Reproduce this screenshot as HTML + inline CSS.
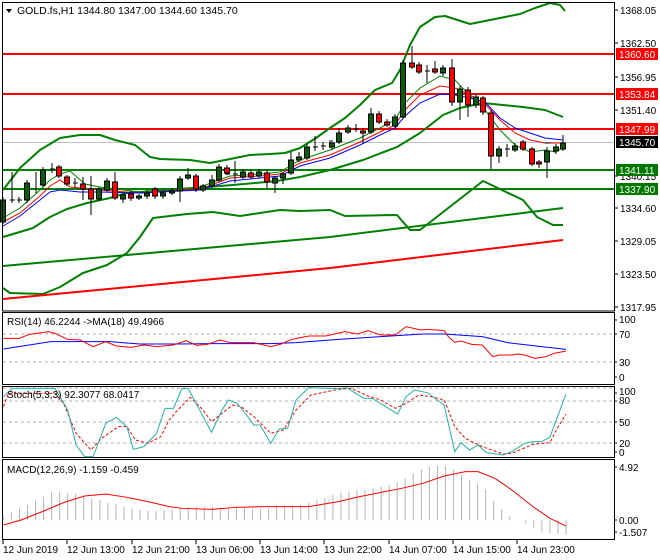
<!DOCTYPE html>
<html><head><meta charset="utf-8"><style>
html,body{margin:0;padding:0;background:#fff;width:660px;height:560px;overflow:hidden}
svg{display:block;font-family:"Liberation Sans",sans-serif;font-size:10px}
</style></head><body>
<svg width="660" height="560" viewBox="0 0 660 560" xmlns="http://www.w3.org/2000/svg">
<rect width="660" height="560" fill="#fff"/>
<!-- main horizontal levels -->
<line x1="3" y1="142.5" x2="614" y2="142.5" stroke="#c0c0c0" stroke-width="1"/>
<g stroke="#ff0000" stroke-width="2">
<line x1="3" y1="54" x2="614" y2="54"/><line x1="3" y1="94" x2="614" y2="94"/><line x1="3" y1="129" x2="614" y2="129"/>
</g>
<g stroke="#008000" stroke-width="2">
<line x1="3" y1="170" x2="614" y2="170"/><line x1="3" y1="189" x2="614" y2="189"/>
</g>
<!-- bands & MAs -->
<g fill="none" stroke-width="2" stroke-linejoin="round">
<polyline stroke="#008000" points="3,190 20,168 40,150 60,138 80,135 100,135 115,140 135,145 150,157 160,159 190,160 210,163 230,159 250,155 270,154 285,153 300,148 316,138 330,128 345,118 360,105 375,90 392,83 400,70 410,45 420,27 435,17 445,16 470,24 485,21 500,18 520,14 535,8 550,3 560,5 565,11"/>
<polyline stroke="#008000" points="3,237 33,228 50,217 67,209 87,203 110,198 127,193 167,190 233,185 277,181 300,177 330,170 363,160 397,147 420,133 443,115 460,108 483,103 523,107 545,110 563,117"/>
<polyline stroke="#008000" points="3,288 10,293 43,294 60,287 83,273 107,265 127,253 140,237 153,218 187,214 213,212 240,216 280,210 300,211 330,210 345,216 397,215 410,230 420,230 483,181 523,200 537,217 553,225 563,225"/>
<polyline stroke="#008000" points="3,266 330,237 563,208"/>
<polyline stroke="#ff0000" points="3,299 330,268 563,240"/>
</g>
<g fill="none" stroke-width="1">
<polyline stroke="#008000" points="3,218 20,208 40,190 50,180 60,174 70,171 85,184 100,187 140,192 200,187 230,176 260,174 280,172 300,160 330,150 360,138 380,128 395,120 405,103 420,88 440,76 455,80 470,96 485,110 500,130 515,145 530,152 545,150 555,152 563,148"/>
<polyline stroke="#ff0000" points="3,222 20,213 40,196 50,186 60,180 70,187 100,190 140,193 200,189 230,178 260,176 280,174 300,163 330,155 360,142 380,132 395,125 405,110 420,95 440,86 455,88 470,95 485,104 500,120 515,133 530,140 545,143 563,143"/>
<polyline stroke="#0000ff" points="3,226 20,216 40,200 50,192 60,190 80,192 100,192 140,193 200,190 230,181 260,178 280,176 300,166 330,158 360,145 380,135 395,128 405,116 420,103 440,94 455,95 470,98 485,102 500,118 515,128 530,133 545,138 563,140"/>
</g>
<!-- candles -->
<g stroke="#000" stroke-width="1" fill="none">
<path d="M3,197V224M12,172V203M19,197V203M27,180V203M36,172V193M43,167V187M52,163V173M59,165V178M67,175V186M75,178V187M83,177V200M91,176V215M99,187V201M107,178V192M115,172V200M123,193V203M131,191V201M139,194V200M147,190V199M155,187V199M163,191V199M172,188V195M180,176V202M188,168V180M196,174V192M203,184V192M212,175V188M219,164V182M227,165V175M235,161V183M243,169V179M251,170V179M259,169V178M267,170V188M275,176V193M283,172V184M291,152V175M299,152V162M307,144V160M315,136V151M323,142V150M330,140V148M332,140V150M339,128V144M348,125V134M356,124V132M363,128V143M371,108V134M379,111V124M387,119V127M395,114V129M403,60V118M412,46V69M419,62V74M427,65V83M435,61V74M443,65V76M452,59V106M460,86V120M468,87V117M476,94V108M483,96V115M491,110V169M499,146V163M507,144V157M515,143V152M523,140V151M532,147V166M539,160V168M547,147V178M556,144V154M563,135V151"/>
</g>
<g stroke="#000" stroke-width="1" fill="#0b5d0b">
<rect x="0.5" y="200" width="5" height="22"/><rect x="24.5" y="183" width="5" height="17"/><rect x="40.5" y="170" width="5" height="15"/><rect x="96.5" y="189" width="5" height="10"/><rect x="104.5" y="181" width="5" height="9"/><rect x="120.5" y="195" width="5" height="4"/><rect x="136.5" y="196" width="5" height="2"/><rect x="144.5" y="193" width="5" height="3"/><rect x="160.5" y="193" width="5" height="3"/><rect x="169.5" y="191" width="5" height="2"/><rect x="177.5" y="179" width="5" height="12"/><rect x="185.5" y="175" width="5" height="3"/><rect x="200.5" y="186" width="5" height="4"/><rect x="209.5" y="180" width="5" height="6"/><rect x="216.5" y="167" width="5" height="13"/><rect x="240.5" y="172" width="5" height="5"/><rect x="256.5" y="172" width="5" height="4"/><rect x="272.5" y="178" width="5" height="5"/><rect x="280.5" y="174" width="5" height="4"/><rect x="288.5" y="160" width="5" height="13"/><rect x="296.5" y="157" width="5" height="3"/><rect x="304.5" y="147" width="5" height="11"/><rect x="329.5" y="143" width="5" height="4"/><rect x="336.5" y="133" width="5" height="9"/><rect x="345.5" y="128" width="5" height="4"/><rect x="368.5" y="114" width="5" height="18"/><rect x="392.5" y="117" width="5" height="9"/><rect x="400.5" y="63" width="5" height="54"/><rect x="440.5" y="68" width="5" height="5"/><rect x="457.5" y="89" width="5" height="13"/><rect x="473.5" y="97" width="5" height="8"/><rect x="496.5" y="149" width="5" height="7"/><rect x="512.5" y="146" width="5" height="4"/><rect x="544.5" y="151" width="5" height="11"/><rect x="553.5" y="147" width="5" height="4"/><rect x="560.5" y="143" width="5" height="6"/>
</g>
<g stroke="#000" stroke-width="1" fill="#ff0000">
<rect x="56.5" y="167" width="5" height="9"/><rect x="64.5" y="177" width="5" height="7"/><rect x="80.5" y="184" width="5" height="5"/><rect x="88.5" y="189" width="5" height="10"/><rect x="112.5" y="182" width="5" height="16"/><rect x="128.5" y="194" width="5" height="4"/><rect x="152.5" y="189" width="5" height="7"/><rect x="193.5" y="176" width="5" height="13"/><rect x="224.5" y="168" width="5" height="5"/><rect x="248.5" y="173" width="5" height="4"/><rect x="264.5" y="173" width="5" height="9"/><rect x="360.5" y="131" width="5" height="2"/><rect x="376.5" y="114" width="5" height="8"/><rect x="384.5" y="122" width="5" height="3"/><rect x="409.5" y="63" width="5" height="4"/><rect x="416.5" y="65" width="5" height="7"/><rect x="432.5" y="69" width="5" height="3"/><rect x="449.5" y="68" width="5" height="34"/><rect x="465.5" y="90" width="5" height="15"/><rect x="480.5" y="98" width="5" height="14"/><rect x="488.5" y="113" width="5" height="43"/><rect x="520.5" y="142" width="5" height="7"/><rect x="529.5" y="149" width="5" height="15"/><rect x="536.5" y="162" width="5" height="2"/>
</g>
<g stroke="#000" stroke-width="1">
<path d="M10,200H15M17,200H22M50,169H55M73,183H78M225,174H230M233,174H238M313,147H318M321,146H326M354,129H359M425,71H430M505,149H510M545,143H550"/>
</g>
<!-- header -->
<path d="M6,9 L12,9 L9,13 Z" fill="#000"/>
<text x="17" y="14" font-size="10.5">GOLD.fs,H1  1344.80 1347.00 1344.60 1345.70</text>

<!-- panel frames -->
<g fill="none" stroke="#000" stroke-width="1">
<rect x="2.5" y="2.5" width="612" height="308.5"/>
<rect x="2.5" y="312.5" width="612" height="72"/>
<rect x="2.5" y="386.5" width="612" height="71"/>
<rect x="2.5" y="459.5" width="612" height="80"/>
</g>
<!-- axis labels main -->
<g font-size="10" fill="#000">
<g stroke="#000"><path d="M614,10H618M614,43H618M614,77H618M614,110H618M614,176H618M614,208H618M614,241H618M614,274H618M614,307H618"/></g>
<text x="620" y="14">1368.05</text><text x="620" y="47">1362.50</text><text x="620" y="81">1356.95</text><text x="620" y="114">1351.40</text><text x="620" y="180">1340.15</text><text x="620" y="212">1334.60</text><text x="620" y="245">1329.05</text><text x="620" y="278">1323.50</text><text x="620" y="311">1317.95</text>
</g>
<rect x="616" y="48" width="42" height="12" fill="#ff0000"/><text x="619" y="58" fill="#fff">1360.60</text>
<rect x="616" y="88" width="42" height="12" fill="#ff0000"/><text x="619" y="98" fill="#fff">1353.84</text>
<rect x="616" y="123" width="42" height="12" fill="#ff0000"/><text x="619" y="133" fill="#fff">1347.99</text>
<rect x="616" y="136" width="42" height="12" fill="#000"/><text x="619" y="146" fill="#fff">1345.70</text>
<rect x="616" y="164" width="42" height="12" fill="#007800"/><text x="619" y="174" fill="#fff">1341.11</text>
<rect x="616" y="183" width="42" height="12" fill="#007800"/><text x="619" y="193" fill="#fff">1337.90</text>

<!-- RSI -->
<g stroke="#b0b0b0" stroke-dasharray="3,3"><line x1="3" y1="334" x2="614" y2="334"/><line x1="3" y1="362" x2="614" y2="362"/></g>
<g transform="translate(0,310) scale(0.423,0.3333)" fill="none">
<polyline vector-effect="non-scaling-stroke" stroke="#0000ff" stroke-width="1" points="8,117 120,95 260,95 330,102 420,102 500,101 640,101 700,98 800,88 900,80 1000,72 1050,72 1140,80 1200,98 1260,107 1338,118"/>
<polyline vector-effect="non-scaling-stroke" stroke="#ff0000" stroke-width="1" points="8,85 45,85 70,73 115,65 130,70 160,88 190,90 220,110 250,95 275,108 310,112 340,105 370,110 410,105 440,92 465,106 490,103 520,90 545,98 600,98 640,110 665,102 690,88 730,78 770,78 815,65 845,72 870,62 900,75 935,75 960,50 995,60 1010,58 1050,62 1060,80 1075,97 1090,93 1115,103 1140,105 1165,140 1180,135 1210,135 1225,132 1240,135 1265,145 1290,140 1310,130 1338,123"/>
</g>
<text x="7" y="325" font-size="10">RSI(14) 46.2244  -&gt;MA(18) 49.4966</text>
<g stroke="#000"><path d="M614,320H617M614,334H617M614,362H617M614,377H617"/></g>
<text x="619" y="323">100</text><text x="619" y="338">70</text><text x="619" y="366">30</text><text x="619" y="381">0</text>

<!-- Stoch -->
<g stroke="#b0b0b0" stroke-dasharray="3,3"><line x1="3" y1="401" x2="614" y2="401"/><line x1="3" y1="422" x2="614" y2="422"/><line x1="3" y1="443" x2="614" y2="443"/><line x1="3" y1="388" x2="614" y2="388"/></g>
<g transform="translate(0,310) scale(0.423,0.3333)" fill="none">
<polyline vector-effect="non-scaling-stroke" stroke="#ff0000" stroke-width="1" stroke-dasharray="3,2" points="8,290 20,250 130,250 150,280 180,370 215,420 240,385 280,350 300,350 320,390 350,400 380,380 400,330 420,300 450,262 480,300 500,335 530,305 550,285 570,290 600,320 640,370 670,360 700,300 735,255 800,238 830,235 870,258 900,270 935,295 960,280 990,255 1020,260 1050,270 1075,350 1100,385 1140,410 1190,432 1210,430 1260,403 1300,398 1315,360 1338,312"/>
<polyline vector-effect="non-scaling-stroke" stroke="#20b2aa" stroke-width="1" points="8,260 30,235 130,235 160,300 180,405 200,440 220,440 250,340 275,322 300,350 315,418 340,410 370,370 390,295 410,295 430,236 445,236 500,367 525,300 540,270 560,280 580,310 600,345 615,345 640,400 660,357 680,355 700,270 730,233 800,236 820,233 860,265 880,265 940,312 960,260 980,240 1010,248 1050,285 1075,425 1090,398 1110,420 1130,405 1150,428 1190,435 1210,425 1240,400 1260,395 1280,395 1300,382 1338,252"/>
</g>
<text x="7" y="398" font-size="10">Stoch(5,3,3) 92.3077 68.0417</text>
<g stroke="#000"><path d="M614,393H617M614,401H617M614,422H617M614,443H617M614,452H617"/></g>
<text x="619" y="395">100</text><text x="619" y="404">80</text><text x="619" y="426">50</text><text x="619" y="447">20</text><text x="619" y="456">0</text>

<!-- MACD -->
<g transform="translate(0,310) scale(0.423,0.3333)" fill="none">
<path vector-effect="non-scaling-stroke" stroke="#b4b4b4" stroke-width="1" d="M8,631V620M27,631V608M46,631V595M65,631V585M84,631V572M103,631V560M122,631V545M141,631V545M160,631V548M179,631V552M198,631V558M217,631V565M236,631V570M255,631V578M274,631V583M293,631V590M312,631V595M331,631V600M350,631V603M369,631V603M388,631V600M407,631V598M426,631V595M445,631V592M464,631V590M483,631V590M502,631V590M521,631V592M540,631V595M559,631V595M578,631V595M597,631V598M616,631V598M635,631V595M654,631V590M673,631V590M692,631V588M711,631V584M730,631V578M749,631V570M768,631V565M787,631V555M806,631V548M825,631V545M844,631V542M863,631V540M882,631V535M901,631V530M920,631V525M939,631V518M958,631V505M977,631V490M996,631V478M1015,631V470M1034,631V466M1053,631V468M1072,631V480M1091,631V495M1110,631V510M1129,631V520M1148,631V537M1167,631V572M1186,631V598M1205,631V618M1243,631V640M1262,631V655M1281,631V665M1300,631V670M1319,631V672M1338,631V674"/>
<polyline vector-effect="non-scaling-stroke" stroke="#ff0000" stroke-width="1" points="8,645 50,630 100,605 150,578 200,558 250,552 300,562 350,575 400,590 430,595 500,598 560,592 620,590 730,590 800,575 850,560 950,535 1000,520 1050,498 1100,485 1130,485 1170,505 1210,540 1260,590 1300,625 1338,648"/>
</g>
<text x="7" y="473" font-size="10">MACD(12,26,9) -1.159 -0.459</text>
<g stroke="#000"><path d="M614,467H617M614,520H617M614,532H617"/></g>
<text x="619" y="471">4.92</text><text x="619" y="524">0.00</text><text x="619" y="536">-1.507</text>

<!-- time axis -->
<g stroke="#000"><path d="M3,540V544M67,540V544M132,540V544M196,540V544M260,540V544M324,540V544M389,540V544M453,540V544M517,540V544"/></g>
<g font-size="10">
<text x="3" y="553">12 Jun 2019</text><text x="67" y="553">12 Jun 13:00</text><text x="132" y="553">12 Jun 21:00</text><text x="196" y="553">13 Jun 06:00</text><text x="260" y="553">13 Jun 14:00</text><text x="324" y="553">13 Jun 22:00</text><text x="389" y="553">14 Jun 07:00</text><text x="453" y="553">14 Jun 15:00</text><text x="517" y="553">14 Jun 23:00</text>
</g>
</svg>
</body></html>
